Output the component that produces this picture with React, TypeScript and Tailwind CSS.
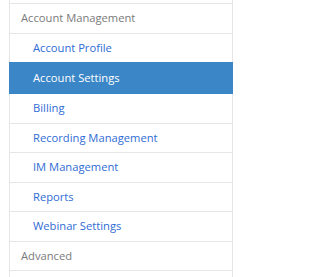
import React from "react";

const subItems = [
  { label: "Account Profile", h: "h-[30px]" },
  { label: "Account Settings", h: "h-[32px]", active: true },
  { label: "Billing", h: "h-[31px]" },
  { label: "Recording Management", h: "h-[30px]" },
  { label: "IM Management", h: "h-[31px]" },
  { label: "Reports", h: "h-[30px]" },
  { label: "Webinar Settings", h: "h-[31px]" },
];

export default function App() {
  return (
    <div
      className="w-[241px] h-[277px] overflow-hidden bg-white"
      style={{ fontFamily: '"Open Sans", "Noto Sans", sans-serif' }}
    >
      <div className="ml-[9px] w-[224px] flex flex-col">
        <div className="h-[4px] border-x border-b border-[#e6e6e6] -mb-px" />
        <div className="h-[31px] border border-[#e6e6e6] -mb-px flex items-center pl-[11px] text-[11.2px] text-[#7a7a7a]">
          Account Management
        </div>
        {subItems.map((it) => (
          <div
            key={it.label}
            className={
              it.active
                ? `${it.h} relative z-10 border border-[#3a86c7] bg-[#3a86c7] -mb-px flex items-center pl-[23px] text-[11.2px] text-white`
                : `${it.h} border border-[#e6e6e6] -mb-px flex items-center pl-[23px] text-[11.2px] text-[#2f6cd4]`
            }
          >
            {it.label}
          </div>
        ))}
        <div className="h-[30px] border border-[#e6e6e6] -mb-px flex items-center pl-[11px] text-[11.2px] text-[#7a7a7a]">
          Advanced
        </div>
        <div className="h-[30px] border border-[#e6e6e6]" />
      </div>
    </div>
  );
}
